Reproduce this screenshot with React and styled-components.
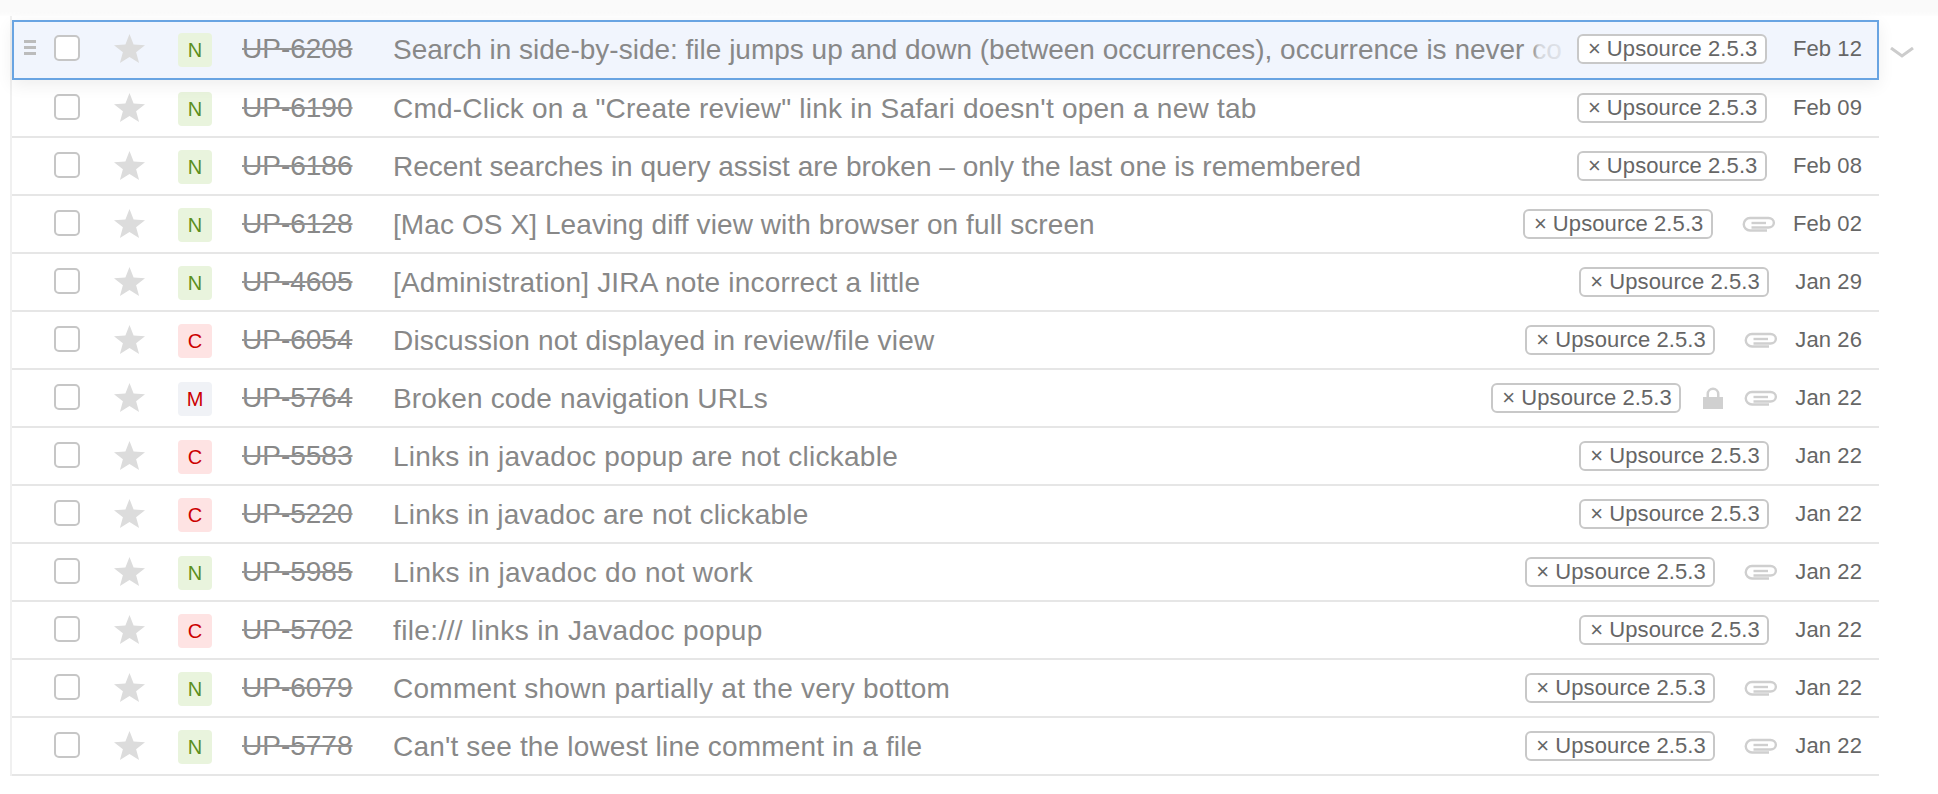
import React from 'react';
import styled, { createGlobalStyle } from 'styled-components';

/** Module styles. */

const GlobalStyle = createGlobalStyle`
	html, body {
		margin: 0;
		padding: 0;
		background: #fff;
		font-family: "Liberation Sans", Arial, sans-serif;
	}
`;

const Page = styled.div`
	width: 1938px;
	height: 794px;
	overflow: hidden;
	background: #fff;
`;

const TopBand = styled.div`
	height: 16px;
	background: linear-gradient(#fafafa 70%, #fdfdfd);
`;

const List = styled.div`
	margin-left: 10px;
	width: 1867px;
	padding-top: 4px;
	border-left: 2px solid #f0f0f0;
`;

const Row = styled.div`
	position: relative;
	box-sizing: border-box;
	display: flex;
	align-items: center;
	height: ${props => (props.$focused ? '60px' : '58px')};
	padding: ${props => (props.$focused ? '0 15px 2px 40px' : '0 17px 0 42px')};
	border-bottom: 2px solid #e6e6e6;
	${props =>
		props.$focused &&
		`
		border: 2px solid #69a4e2;
		background: #f1f5fd;
		box-shadow: 0 5px 16px rgba(0, 0, 0, 0.07);
		z-index: 1;
	`}
`;

const Handle = styled.div`
	position: absolute;
	left: 10px;
	top: 18px;
	width: 12px;
	height: 15px;
	background: repeating-linear-gradient(#bcbcbc 0 3px, transparent 3px 6px);
`;

const Chevron = styled.svg`
	position: absolute;
	right: -37px;
	top: 25px;
`;

const Check = styled.div`
	box-sizing: border-box;
	flex: none;
	width: 26px;
	height: 26px;
	margin-top: -2px;
	background: #fff;
	border: 2px solid #c6c6c6;
	border-radius: 5px;
`;

const Star = styled.svg`
	flex: none;
	margin: -2px 33px 0 34px;
	fill: #dcdcdc;
`;

const Badge = styled.div`
	flex: none;
	display: flex;
	align-items: center;
	justify-content: center;
	width: 34px;
	height: 34px;
	margin-top: 2px;
	border-radius: 4px;
	font-size: 20px;
	color: ${props => (props.$type === 'N' ? '#5b8f1d' : '#cc0000')};
	background: ${props =>
		({ N: '#e9f4dd', C: '#fee3e3', M: '#f0f2f6' })[props.$type]};
`;

const IssueId = styled.div`
	flex: none;
	width: 151px;
	margin-left: 30px;
	font-size: 28px;
	color: #888;
	text-decoration: line-through;
	text-decoration-color: #949494;
	white-space: nowrap;
`;

const Summary = styled.div`
	position: relative;
	flex: 1;
	min-width: 0;
	overflow: hidden;
	padding-top: 1px;
	font-size: 28px;
	line-height: 36px;
	letter-spacing: ${props => props.$tracking}px;
	color: #888;
	white-space: nowrap;
`;

const Fade = styled.div`
	position: absolute;
	top: 0;
	right: 0;
	bottom: 0;
	width: 42px;
	background: linear-gradient(
		90deg,
		rgba(241, 245, 253, 0),
		rgba(241, 245, 253, 0.72) 18%,
		rgba(241, 245, 253, 0.85) 75%,
		#f1f5fd
	);
`;

const Tag = styled.div`
	box-sizing: border-box;
	flex: none;
	width: 190px;
	height: 30px;
	margin-left: 3px;
	padding-left: 9px;
	background: #fff;
	border: 2px solid #c8c8c8;
	border-radius: 6px;
	font-size: 22px;
	line-height: 26px;
	letter-spacing: 0.1px;
	color: #666;
	white-space: nowrap;
`;

const Cross = styled.span`
	margin-right: 6px;
`;

const Lock = styled.svg`
	flex: none;
	margin-left: 21px;
	fill: #d0d0d0;
`;

const Clip = styled.svg`
	flex: none;
	margin-left: ${props => (props.$afterLock ? '20px' : '29px')};
	fill: none;
	stroke: #cfcfcf;
	stroke-width: 2.4;
`;

const DateText = styled.div`
	flex: none;
	margin-left: ${props => (props.$afterIcon ? '17px' : '26px')};
	font-size: 22px;
	letter-spacing: 0.1px;
	color: #666;
	white-space: nowrap;
`;

/* Row data. */

const issues = [
	{ type: 'N', id: 'UP-6208', date: 'Feb 12', tracking: 0, title: 'Search in side-by-side: file jumps up and down (between occurrences), occurrence is never co', focused: true },
	{ type: 'N', id: 'UP-6190', date: 'Feb 09', tracking: 0.22, title: 'Cmd-Click on a "Create review" link in Safari doesn\'t open a new tab' },
	{ type: 'N', id: 'UP-6186', date: 'Feb 08', tracking: 0, title: 'Recent searches in query assist are broken – only the last one is remembered' },
	{ type: 'N', id: 'UP-6128', date: 'Feb 02', tracking: 0.09, title: '[Mac OS X] Leaving diff view with browser on full screen', clip: true },
	{ type: 'N', id: 'UP-4605', date: 'Jan 29', tracking: 0.2, title: '[Administration] JIRA note incorrect a little' },
	{ type: 'C', id: 'UP-6054', date: 'Jan 26', tracking: 0.17, title: 'Discussion not displayed in review/file view', clip: true },
	{ type: 'M', id: 'UP-5764', date: 'Jan 22', tracking: 0.17, title: 'Broken code navigation URLs', clip: true, lock: true },
	{ type: 'C', id: 'UP-5583', date: 'Jan 22', tracking: 0.25, title: 'Links in javadoc popup are not clickable' },
	{ type: 'C', id: 'UP-5220', date: 'Jan 22', tracking: 0.18, title: 'Links in javadoc are not clickable' },
	{ type: 'N', id: 'UP-5985', date: 'Jan 22', tracking: 0.3, title: 'Links in javadoc do not work', clip: true },
	{ type: 'C', id: 'UP-5702', date: 'Jan 22', tracking: 0.38, title: 'file:/// links in Javadoc popup' },
	{ type: 'N', id: 'UP-6079', date: 'Jan 22', tracking: 0.26, title: 'Comment shown partially at the very bottom', clip: true },
	{ type: 'N', id: 'UP-5778', date: 'Jan 22', tracking: 0.17, title: "Can't see the lowest line comment in a file", clip: true },
];

/* Function `App` page. */

function App() {
	return (
		<Page>
			<GlobalStyle />
			<TopBand />
			<List>
				{issues.map(issue => (
					<Row key={issue.id} $focused={issue.focused}>
						{issue.focused && <Handle />}
						<Check />
						<Star width="31" height="29" viewBox="0 0 31 29">
							<polygon points="15.5,0 19.6,10.6 31,11.2 22.1,18.3 25.1,29 15.5,23 5.9,29 8.9,18.3 0,11.2 11.4,10.6" />
						</Star>
						<Badge $type={issue.type}>{issue.type}</Badge>
						<IssueId>{issue.id}</IssueId>
						<Summary $tracking={issue.tracking}>
							{issue.title}
							{issue.focused && <Fade />}
						</Summary>
						<Tag>
							<Cross>×</Cross>Upsource 2.5.3
						</Tag>
						{issue.lock && (
							<Lock width="22" height="22" viewBox="0 0 22 22">
								<path d="M1 10h3.5V7a6.5 6.5 0 0 1 13 0v3H21v12H1zm6 0h8V7a4 4 0 0 0-8 0z" />
							</Lock>
						)}
						{issue.clip && (
							<Clip $afterLock={issue.lock} width="34" height="16" viewBox="0 0 34 16">
								<path d="M25 14.5H8a6.2 6.2 0 0 1 0-12.5h18.5a5.2 4.6 0 0 1 0 9.5H9.5" />
								<path d="M9.5 7H24" />
							</Clip>
						)}
						<DateText $afterIcon={issue.clip}>{issue.date}</DateText>
						{issue.focused && (
							<Chevron width="24" height="11" viewBox="0 0 24 11">
								<path d="M1 1l11 8 11-8" fill="none" stroke="#cccccc" strokeWidth="3" />
							</Chevron>
						)}
					</Row>
				))}
			</List>
		</Page>
	);
}

export default App;
